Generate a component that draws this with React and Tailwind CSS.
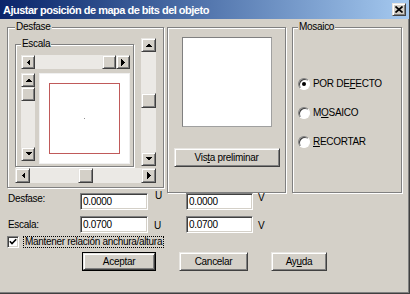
import React from "react";

const raised =
  "bg-[#d4d0c8] border border-t-[#e8e6e2] border-l-[#e8e6e2] border-r-[#404040] border-b-[#404040] shadow-[inset_1px_1px_0_#ffffff,inset_-1px_-1px_0_#808080]";
const sunken =
  "bg-white border border-t-[#808080] border-l-[#808080] border-r-[#ffffff] border-b-[#ffffff] shadow-[inset_1px_1px_0_#404040,inset_-1px_-1px_0_#d4d0c8]";
const etched = "border border-[#808080] shadow-[inset_1px_1px_0_#ffffff,1px_1px_0_#ffffff]";
const track = "bg-[#ebe9e5]";

const Arrow = ({ dir }) => {
  const pts = {
    up: "0,4 7,4 3.5,0.5",
    down: "0,0 7,0 3.5,3.5",
    left: "4,0 4,7 0.5,3.5",
    right: "0,0 0,7 3.5,3.5",
  };
  const vertical = dir === "up" || dir === "down";
  return (
    <svg width={vertical ? 7 : 4} height={vertical ? 4 : 7} shapeRendering="crispEdges">
      <polygon points={pts[dir]} fill="#000" />
    </svg>
  );
};

const Btn = ({ dir, className = "" }) => (
  <div className={`${raised} ${className} flex items-center justify-center shrink-0`}>
    <Arrow dir={dir} />
  </div>
);

const Field = ({ value }) => (
  <div className={`${sunken} h-[17px] flex items-center pl-[2px]`}>{value}</div>
);

const Radio = ({ checked, children }) => (
  <div className="flex items-center gap-[3px] h-[13px]">
    <div className="w-[12px] h-[12px] rounded-full bg-white border border-t-[#808080] border-l-[#808080] border-r-[#ffffff] border-b-[#ffffff] shadow-[inset_1px_1px_0_#404040] flex items-center justify-center">
      {checked && <div className="w-[4px] h-[4px] rounded-full bg-black" />}
    </div>
    <span>{children}</span>
  </div>
);

export default function App() {
  return (
    <div className="w-[410px] h-[294px] bg-[#d4d0c8] border-r border-b border-r-[#404040] border-b-[#404040] shadow-[inset_-1px_-1px_0_#808080] flex flex-col overflow-hidden font-['Liberation_Sans',Arial,sans-serif] text-[10px] leading-[12px] tracking-[-0.3px] text-black">
      {/* title bar */}
      <div className="h-[19px] shrink-0 flex items-center pl-[3px] pr-[3px] bg-linear-to-r from-[#0a246a] to-[#a6caf0]">
        <span className="text-white font-bold text-[11px] tracking-[-0.5px]">
          Ajustar posición de mapa de bits del objeto
        </span>
        <div className={`${raised} ml-auto w-[14px] h-[13px] flex items-center justify-center`}>
          <svg width="8" height="7">
            <path d="M0.5,0.5 L7.5,6.5 M7.5,0.5 L0.5,6.5" stroke="#000" strokeWidth="1.7" />
          </svg>
        </div>
      </div>

      {/* groups */}
      <div className="flex items-start pt-[2px] pl-[7px]">
        <fieldset className={`${etched} w-[157px] h-[167px] p-0 m-0`}>
          <legend className="ml-[7px] px-[1px] bg-[#d4d0c8] leading-[12px]">Desfase</legend>
          <div className="pl-[7px] pt-[5px] grid grid-cols-[119px_15px] gap-x-[7px] gap-y-[1px]">
            <fieldset className={`${etched} w-[119px] h-[129px] p-0 m-0`}>
              <legend className="ml-[5px] px-[1px] bg-[#d4d0c8] leading-[12px]">Escala</legend>
              <div className="pl-[5px] pt-[5px] grid grid-cols-[14px_91px] gap-x-[4px] gap-y-[4px]">
                <div className={`col-span-2 h-[14px] flex ${track}`}>
                  <Btn dir="left" className="w-[14px] h-[14px]" />
                  <div className="flex-1 flex justify-end">
                    <div className={`${raised} w-[14px] h-[14px]`} />
                  </div>
                  <Btn dir="right" className="w-[14px] h-[14px]" />
                </div>
                <div className={`w-[14px] h-[88px] flex flex-col ${track}`}>
                  <Btn dir="up" className="w-[14px] h-[14px]" />
                  <div className="flex-1">
                    <div className={`${raised} w-[14px] h-[14px]`} />
                  </div>
                  <Btn dir="down" className="w-[14px] h-[14px]" />
                </div>
                <div className="w-[91px] h-[91px] bg-white border border-[#f0f0f0] p-[9px]">
                  <div className="w-full h-full border border-[#c05a5a] flex items-center justify-center">
                    <div className="w-[1px] h-[1px] bg-[#909090]" />
                  </div>
                </div>
              </div>
            </fieldset>
            <div className={`w-[15px] h-[128px] flex flex-col ${track}`}>
              <Btn dir="up" className="w-[15px] h-[14px]" />
              <div className="flex-1 flex flex-col pt-[41px]">
                <div className={`${raised} w-[15px] h-[15px]`} />
              </div>
              <Btn dir="down" className="w-[15px] h-[14px]" />
            </div>
            <div className={`col-span-2 h-[15px] flex ${track}`}>
              <Btn dir="left" className="w-[15px] h-[15px]" />
              <div className="flex-1 flex pl-[48px]">
                <div className={`${raised} w-[15px] h-[15px]`} />
              </div>
              <Btn dir="right" className="w-[15px] h-[15px]" />
            </div>
          </div>
        </fieldset>

        <div className={`${etched} ml-[3px] mt-[6px] w-[119px] h-[166px] flex flex-col items-center pt-[9px]`}>
          <div className="w-[90px] h-[90px] bg-white border border-t-[#808080] border-l-[#808080] border-r-[#a0a0a0] border-b-[#a0a0a0]" />
          <div className={`${raised} mt-[21px] w-[106px] h-[19px] flex items-center justify-center`}>
            <span>
              Vis<u className="underline">t</u>a preliminar
            </span>
          </div>
        </div>

        <fieldset className={`${etched} ml-[6px] w-[110px] h-[172px] p-0 m-0`}>
          <legend className="ml-[5px] px-[1px] bg-[#d4d0c8] leading-[12px]">Mosaico</legend>
          <div className="pl-[5px] pt-[44px] flex flex-col gap-[16px]">
            <Radio checked>
              POR DE<u className="underline">F</u>ECTO
            </Radio>
            <Radio>
              M<u className="underline">O</u>SAICO
            </Radio>
            <Radio>
              <u className="underline">R</u>ECORTAR
            </Radio>
          </div>
        </fieldset>
      </div>

      {/* values */}
      <div className="grid grid-cols-[72px_68px_38px_67px_auto] gap-y-[6px] pl-[8px]">
        <span className="self-start">Desfase:</span>
        <Field value="0.0000" />
        <span className="self-start pl-[7px] -mt-[3px]">U</span>
        <Field value="0.0000" />
        <span className="self-start pl-[5px] -mt-[1px]">V</span>

        <span className="self-center">Escala:</span>
        <Field value="0.0700" />
        <span className="self-end pl-[6px] mb-[1px]">U</span>
        <Field value="0.0700" />
        <span className="self-end pl-[5px] mb-[1px]">V</span>
      </div>

      <div className="flex items-center pl-[7px] mt-[2px] h-[13px]">
        <div className={`${sunken} w-[12px] h-[12px] flex items-center justify-center`}>
          <svg width="8" height="7">
            <polyline points="0.8,3.2 3,5.5 7.2,1.2" fill="none" stroke="#000" strokeWidth="1.6" />
          </svg>
        </div>
        <span className="ml-[4px] px-[1px] border border-dotted border-black leading-[10px]">
          Mantener relación anchura/altura
        </span>
      </div>

      <div className="flex justify-center gap-[23px] mt-[4px]">
        <div className="border border-black">
          <div className={`${raised} w-[72px] h-[17px] flex items-center justify-center`}>Aceptar</div>
        </div>
        <div className={`${raised} w-[69px] h-[19px] flex items-center justify-center`}>Cancelar</div>
        <div className={`${raised} w-[56px] h-[19px] flex items-center justify-center`}>
          <span>
            Ay<u className="underline">u</u>da
          </span>
        </div>
      </div>
    </div>
  );
}
